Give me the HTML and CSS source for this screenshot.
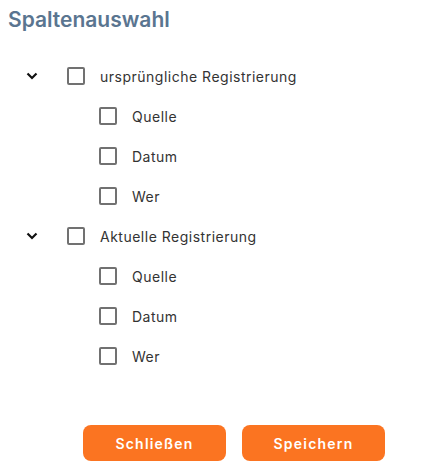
FILE: index.html
```html
<!DOCTYPE html>
<html lang="de">
<head>
<meta charset="utf-8">
<title>Spaltenauswahl</title>
<link rel="stylesheet" href="styles.css">
</head>
<body>
<div class="dialog">
  <h2 class="title">Spaltenauswahl</h2>
  <div class="tree">
    <div class="row parent">
      <span class="toggle"><svg width="12" height="8" viewBox="0 0 12 8"><path d="M1.5 1.5 L6 6 L10.5 1.5" fill="none" stroke="#111" stroke-width="2.2"/></svg></span>
      <span class="box"></span>
      <span class="label">ursprüngliche Registrierung</span>
    </div>
    <div class="row child"><span class="box"></span><span class="label">Quelle</span></div>
    <div class="row child"><span class="box"></span><span class="label">Datum</span></div>
    <div class="row child"><span class="box"></span><span class="label">Wer</span></div>
    <div class="row parent">
      <span class="toggle"><svg width="12" height="8" viewBox="0 0 12 8"><path d="M1.5 1.5 L6 6 L10.5 1.5" fill="none" stroke="#111" stroke-width="2.2"/></svg></span>
      <span class="box"></span>
      <span class="label">Aktuelle Registrierung</span>
    </div>
    <div class="row child"><span class="box"></span><span class="label">Quelle</span></div>
    <div class="row child"><span class="box"></span><span class="label">Datum</span></div>
    <div class="row child"><span class="box"></span><span class="label">Wer</span></div>
  </div>
  <div class="actions">
    <button class="btn">Schließen</button>
    <button class="btn">Speichern</button>
  </div>
</div>
</body>
</html>
```
FILE: styles.css
```css
* { box-sizing: border-box; }
body {
  margin: 0;
  background: #fff;
  font-family: "Inter", "Open Sans", sans-serif;
  color: #333;
}
.dialog {
  width: 425px;
  height: 472px;
  display: flex;
  flex-direction: column;
}
.title {
  margin: 0;
  padding: 4px 0 0 8px;
  font-size: 21px;
  line-height: 32px;
  font-weight: 600;
  color: #5a7590;
}
.tree {
  margin-top: 20px;
  display: flex;
  flex-direction: column;
}
.row {
  height: 40px;
  display: flex;
  align-items: center;
}
.parent { padding-left: 24px; }
.child { padding-left: 99px; }
.toggle {
  width: 16px;
  display: flex;
  justify-content: center;
  margin-right: 27px;
}
.toggle svg { display: block; }
.box {
  width: 18px;
  height: 18px;
  border: 2px solid #717171;
  border-radius: 2px;
  flex: none;
}
.label {
  margin-left: 15px;
  font-size: 14px;
  letter-spacing: 0.5px;
  color: #333;
}
.actions {
  margin-top: 49px;
  display: flex;
  gap: 16px;
  padding-left: 83px;
}
.btn {
  width: 143px;
  height: 36px;
  border: none;
  border-radius: 8px;
  background: #fb7421;
  color: #fff;
  font-family: inherit;
  font-size: 14px;
  font-weight: 600;
  letter-spacing: 1.2px;
}
```
